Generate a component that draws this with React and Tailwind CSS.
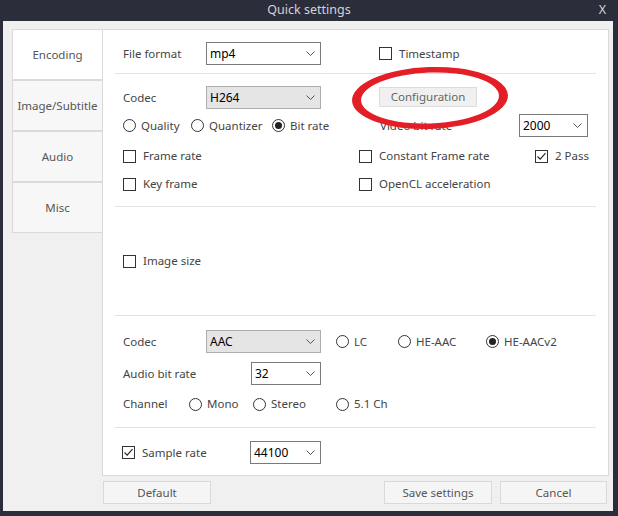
import React from 'react';

const font = { fontFamily: '"Noto Sans", "Liberation Sans", sans-serif' };

const Chevron = () => (
    <svg width="9" height="5" viewBox="0 0 9 5" className="shrink-0">
        <polyline points="0.5,0.5 4.5,4.5 8.5,0.5" fill="none" stroke="#555" strokeWidth="1" />
    </svg>
);

const Select = ({ value, w, gray }) => (
    <div
        className={`h-[23px] flex items-center justify-between pl-[3px] pr-[5px] border shrink-0 text-black text-[12px]
        ${gray ? 'bg-[#e5e5e5] border-[#adadad]' : 'bg-white border-[#7a7a7a]'}`}
        style={{ width: w }}
    >
        <span className="leading-none">{value}</span>
        <Chevron />
    </div>
);

const Check = ({ label, checked, w }) => (
    <div className="flex items-center gap-[7px] shrink-0" style={w ? { width: w } : undefined}>
        <div className="w-[13px] h-[13px] border border-[#333] bg-white flex items-center justify-center shrink-0">
            {checked && (
                <svg width="11" height="11" viewBox="0 0 11 11">
                    <polyline points="1.5,5.5 4.2,8.2 9.5,2.2" fill="none" stroke="#222" strokeWidth="1.1" />
                </svg>
            )}
        </div>
        <span>{label}</span>
    </div>
);

const Radio = ({ label, checked, w }) => (
    <div className="flex items-center gap-[5px] shrink-0" style={w ? { width: w } : undefined}>
        <div className="w-[13px] h-[13px] rounded-full border border-[#333] bg-white flex items-center justify-center shrink-0">
            {checked && <div className="w-[7px] h-[7px] rounded-full bg-[#222]" />}
        </div>
        <span>{label}</span>
    </div>
);

const Divider = ({ mt }) => (
    <div className="mx-[12px] h-px bg-[#e3e3e3]" style={{ marginTop: mt }} />
);

const tabs = ['Encoding', 'Image/Subtitle', 'Audio', 'Misc'];

export default function App() {
    return (
        <div className="relative w-[618px] h-[516px] bg-[#2b2d3a] flex flex-col text-[11.5px] text-[#444]" style={font}>
            {/* Title bar */}
            <div className="h-[21px] shrink-0 grid grid-cols-[1fr_auto_1fr] items-center text-[12.5px] text-[#d4d4d8]">
                <div />
                <span>Quick settings</span>
                <span className="justify-self-end pr-[12px]">X</span>
            </div>

            {/* Body */}
            <div className="ml-[3px] mr-[5px] mb-[5px] flex-1 bg-[#f0f0f0] flex flex-col">
                <div className="flex pt-[8px] pl-[9px]">
                    {/* Tabs */}
                    <div className="w-[90px] flex flex-col shrink-0">
                        {tabs.map((t, i) => (
                            <div
                                key={t}
                                className={`h-[51px] flex items-center justify-center border-l border-t border-b border-[#dadada] text-[#555]
                                ${i === 0 ? 'bg-white' : 'bg-[#f7f7f7]'}`}
                            >
                                {t}
                            </div>
                        ))}
                    </div>

                    {/* Panel */}
                    <div className="w-[507px] h-[447px] bg-white border border-[#dadada] flex flex-col">
                        {/* File format */}
                        <div className="mt-[12px] pl-[20px] h-[23px] flex items-center">
                            <span className="w-[83px] shrink-0">File format</span>
                            <Select value="mp4" w={115} />
                            <div className="ml-[58px]">
                                <Check label="Timestamp" />
                            </div>
                        </div>
                        <Divider mt={8} />

                        {/* Video */}
                        <div className="mt-[12px] pl-[20px] h-[23px] flex items-center">
                            <span className="w-[83px] shrink-0">Codec</span>
                            <Select value="H264" w={115} gray />
                            <div className="ml-[58px] -mt-[2px] w-[98px] h-[20px] bg-[#f0f0f0] border border-[#dcdcdc] flex items-center justify-center text-[#666]">
                                Configuration
                            </div>
                        </div>
                        <div className="mt-[5px] pl-[20px] h-[23px] flex items-center">
                            <Radio label="Quality" w={68} />
                            <Radio label="Quantizer" w={81} />
                            <Radio label="Bit rate" checked w={108} />
                            <span className="w-[139px] shrink-0">Video bit rate</span>
                            <Select value="2000" w={69} />
                        </div>
                        <div className="mt-[8px] pl-[20px] h-[22px] flex items-center">
                            <Check label="Frame rate" w={236} />
                            <Check label="Constant Frame rate" w={176} />
                            <Check label="2 Pass" checked />
                        </div>
                        <div className="mt-[6px] pl-[20px] h-[22px] flex items-center">
                            <Check label="Key frame" w={236} />
                            <Check label="OpenCL acceleration" />
                        </div>
                        <Divider mt={11} />

                        {/* Image */}
                        <div className="mt-[43px] pl-[20px] h-[22px] flex items-center">
                            <Check label="Image size" />
                        </div>
                        <Divider mt={43} />

                        {/* Audio */}
                        <div className="mt-[14px] pl-[20px] h-[23px] flex items-center">
                            <span className="w-[83px] shrink-0">Codec</span>
                            <Select value="AAC" w={115} gray />
                            <div className="ml-[15px] flex items-center">
                                <Radio label="LC" w={62} />
                                <Radio label="HE-AAC" w={88} />
                                <Radio label="HE-AACv2" checked />
                            </div>
                        </div>
                        <div className="mt-[9px] pl-[20px] h-[23px] flex items-center">
                            <span className="w-[128px] shrink-0">Audio bit rate</span>
                            <Select value="32" w={70} />
                        </div>
                        <div className="mt-[8px] pl-[20px] h-[22px] flex items-center">
                            <span className="w-[66px] shrink-0">Channel</span>
                            <Radio label="Mono" w={64} />
                            <Radio label="Stereo" w={83} />
                            <Radio label="5.1 Ch" />
                        </div>
                        <Divider mt={12} />

                        <div className="mt-[13px] pl-[19px] h-[23px] flex items-center">
                            <Check label="Sample rate" checked w={128} />
                            <Select value="44100" w={71} />
                        </div>
                    </div>
                </div>

                {/* Buttons */}
                <div className="mt-[5px] flex pl-[100px] text-[#555]">
                    <div className="w-[108px] h-[23px] bg-[#f5f5f5] border border-[#d9d9d9] flex items-center justify-center">Default</div>
                    <div className="ml-[173px] w-[108px] h-[23px] bg-[#f5f5f5] border border-[#d9d9d9] flex items-center justify-center">Save settings</div>
                    <div className="ml-[8px] w-[107px] h-[23px] bg-[#f5f5f5] border border-[#d9d9d9] flex items-center justify-center">Cancel</div>
                </div>
            </div>

            {/* Red annotation ellipse */}
            <svg className="absolute left-[348px] top-[62px] pointer-events-none" width="164" height="72" viewBox="0 0 164 72">
                <path
                    fillRule="evenodd"
                    fill="#e41e26"
                    transform="rotate(-2 82 36)"
                    d="M4 36 a78 31 0 1 0 156 0 a78 31 0 1 0 -156 0 Z M13 36 a69 25.5 0 1 0 138 0 a69 25.5 0 1 0 -138 0 Z"
                />
            </svg>
        </div>
    );
}
